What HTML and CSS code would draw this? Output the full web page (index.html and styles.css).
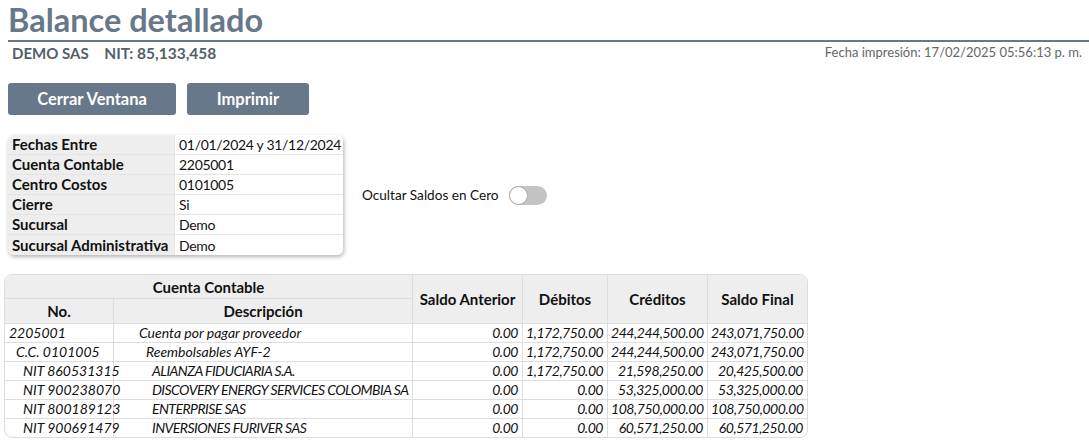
FILE: index.html
```html
<!DOCTYPE html>
<html lang="es">
<head>
<meta charset="utf-8">
<title>Balance detallado</title>
<link rel="stylesheet" href="styles.css">
</head>
<body>
<header class="page-head">
  <h1 class="title">Balance detallado</h1>
</header>
<div class="subhead">
  <div class="company">DEMO SAS <span class="nit">NIT: 85,133,458</span></div>
  <div class="printed">Fecha impresión: 17/02/2025 05:56:13 p. m.</div>
</div>
<div class="actions">
  <button class="btn btn-close">Cerrar Ventana</button>
  <button class="btn btn-print">Imprimir</button>
</div>
<div class="filters">
  <table class="info">
    <tr><th>Fechas Entre</th><td>01/01/2024 y 31/12/2024</td></tr>
    <tr><th>Cuenta Contable</th><td>2205001</td></tr>
    <tr><th>Centro Costos</th><td>0101005</td></tr>
    <tr><th>Cierre</th><td>Si</td></tr>
    <tr><th>Sucursal</th><td>Demo</td></tr>
    <tr><th>Sucursal Administrativa</th><td>Demo</td></tr>
  </table>
  <label class="toggle">Ocultar Saldos en Cero <span class="switch"><span class="knob"></span></span></label>
</div>
<div class="report-wrap">
<table class="report">
  <colgroup>
    <col class="c-no"><col class="c-desc"><col class="c-ant"><col class="c-deb"><col class="c-cred"><col class="c-fin">
  </colgroup>
  <thead>
    <tr class="h1"><th colspan="2">Cuenta Contable</th><th rowspan="2">Saldo Anterior</th><th rowspan="2">Débitos</th><th rowspan="2">Créditos</th><th rowspan="2">Saldo Final</th></tr>
    <tr class="h2"><th>No.</th><th>Descripción</th></tr>
  </thead>
  <tbody>
    <tr><td class="l0">2205001</td><td class="d0">Cuenta por pagar proveedor</td><td class="n">0.00</td><td class="n">1,172,750.00</td><td class="n">244,244,500.00</td><td class="n">243,071,750.00</td></tr>
    <tr><td class="l1">C.C. 0101005</td><td class="d1">Reembolsables AYF-2</td><td class="n">0.00</td><td class="n">1,172,750.00</td><td class="n">244,244,500.00</td><td class="n">243,071,750.00</td></tr>
    <tr><td class="l2">NIT 860531315</td><td class="d2">ALIANZA FIDUCIARIA S.A.</td><td class="n">0.00</td><td class="n">1,172,750.00</td><td class="n">21,598,250.00</td><td class="n">20,425,500.00</td></tr>
    <tr><td class="l2">NIT 900238070</td><td class="d2">DISCOVERY ENERGY SERVICES COLOMBIA SA</td><td class="n">0.00</td><td class="n">0.00</td><td class="n">53,325,000.00</td><td class="n">53,325,000.00</td></tr>
    <tr><td class="l2">NIT 800189123</td><td class="d2">ENTERPRISE SAS</td><td class="n">0.00</td><td class="n">0.00</td><td class="n">108,750,000.00</td><td class="n">108,750,000.00</td></tr>
    <tr><td class="l2">NIT 900691479</td><td class="d2">INVERSIONES FURIVER SAS</td><td class="n">0.00</td><td class="n">0.00</td><td class="n">60,571,250.00</td><td class="n">60,571,250.00</td></tr>
  </tbody>
</table>
</div>
</body>
</html>
```

FILE: styles.css
```css
html, body {
  margin: 0;
  padding: 0;
  background: #fff;
}
body {
  font-family: Lato, "Open Sans", sans-serif;
  color: #111;
  padding-left: 8px;
}
.page-head {
  border-bottom: 2px solid #66788a;
  height: 40px;
}
.title {
  margin: 0;
  font-size: 32.5px;
  line-height: 40px;
  font-weight: 700;
  color: #66788a;
}
.subhead {
  display: flex;
  justify-content: space-between;
  align-items: flex-start;
  padding: 0 7px 0 4px;
  height: 24px;
}
.company {
  font-size: 15px;
  font-weight: 700;
  color: #555f6a;
  line-height: 22px;
}
.company .nit {
  margin-left: 12px;
  font-size: 15.5px;
}
.printed {
  font-size: 13px;
  color: #666;
  line-height: 20px;
}
.actions {
  display: flex;
  gap: 11px;
  margin-top: 17px;
}
.btn {
  font-family: inherit;
  background: #66788a;
  color: #fff;
  border: 0;
  border-radius: 3px;
  height: 32px;
  font-size: 16.5px;
  font-weight: 700;
  padding: 0;
}
.btn-close { width: 168px; }
.btn-print { width: 122px; }
.filters {
  display: flex;
  align-items: center;
  gap: 19px;
  margin-top: 20px;
}
.info {
  border-collapse: separate;
  border-spacing: 0;
  border-radius: 6px;
  box-shadow: 1px 2px 4px rgba(0,0,0,0.3);
  width: 335px;
  table-layout: fixed;
}
.info th, .info td {
  height: 19px;
  padding: 0 3px 0 4px;
  text-align: left;
  border-bottom: 1px solid #e4e4e4;
  line-height: 19px;
  white-space: nowrap;
}
.info tr:last-child th, .info tr:last-child td { border-bottom: 0; height: 20px; }
.info th {
  background: #eee;
  font-weight: 700;
  font-size: 15px;
  width: 159px;
  border-right: 1px solid #e4e4e4;
}
.info td {
  background: #fff;
  font-size: 14px;
  letter-spacing: -0.3px;
}
.info tr:first-child th { border-top-left-radius: 6px; }
.info tr:first-child td { border-top-right-radius: 6px; }
.info tr:last-child th { border-bottom-left-radius: 6px; }
.info tr:last-child td { border-bottom-right-radius: 6px; }
.toggle {
  display: flex;
  align-items: center;
  gap: 10px;
  font-size: 13.6px;
  color: #111;
}
.switch {
  display: inline-block;
  position: relative;
  width: 38px;
  height: 19px;
  border-radius: 10px;
  background: #c4c4c4;
}
.knob {
  position: absolute;
  left: 0;
  top: 0;
  width: 17px;
  height: 17px;
  border-radius: 50%;
  background: #fff;
  border: 1px solid #aaa;
}
.report-wrap {
  margin-top: 19px;
  margin-left: -4px;
  width: 804px;
}
.report {
  width: 804px;
  border-collapse: separate;
  border-spacing: 0;
  border: 1px solid #ddd;
  border-radius: 8px;
  font-size: 14px;
  table-layout: fixed;
}
.c-no { width: 109px; }
.c-desc { width: 299px; }
.c-ant { width: 110px; }
.c-deb { width: 85px; }
.c-cred { width: 100px; }
.c-fin { width: 99px; }
.report th {
  background: #eee;
  font-weight: 700;
  font-size: 15px;
  text-align: center;
  border-right: 1px solid #ddd;
  border-bottom: 1px solid #ddd;
  padding: 0;
  white-space: nowrap;
}
.report th:last-child { border-right: 0; }
.report .h2 th:last-child { border-right: 1px solid #ddd; }
.report .h1 th { height: 23px; }
.report .h2 th { height: 24px; }
.report thead tr:first-child th:first-child { border-top-left-radius: 8px; }
.report thead tr:first-child th:last-child { border-top-right-radius: 8px; }
.report td {
  height: 18px;
  line-height: 18px;
  padding: 0 3px;
  font-style: italic;
  border-right: 1px solid #ddd;
  border-bottom: 1px solid #ddd;
  white-space: nowrap;
  overflow: visible;
}
.report td:last-child { border-right: 0; }
.report tbody tr:last-child td { border-bottom: 0; }
.report td.n {
  text-align: right;
  letter-spacing: -0.45px;
  padding-right: 4px;
}
.report .l0 { padding-left: 4px; }
.report .l1 { padding-left: 11px; }
.report .l2 { padding-left: 18px; }
.report .d0 { padding-left: 25px; }
.report .d1 { padding-left: 32px; }
.report .d2 { padding-left: 38px; letter-spacing: -0.55px; }
```
